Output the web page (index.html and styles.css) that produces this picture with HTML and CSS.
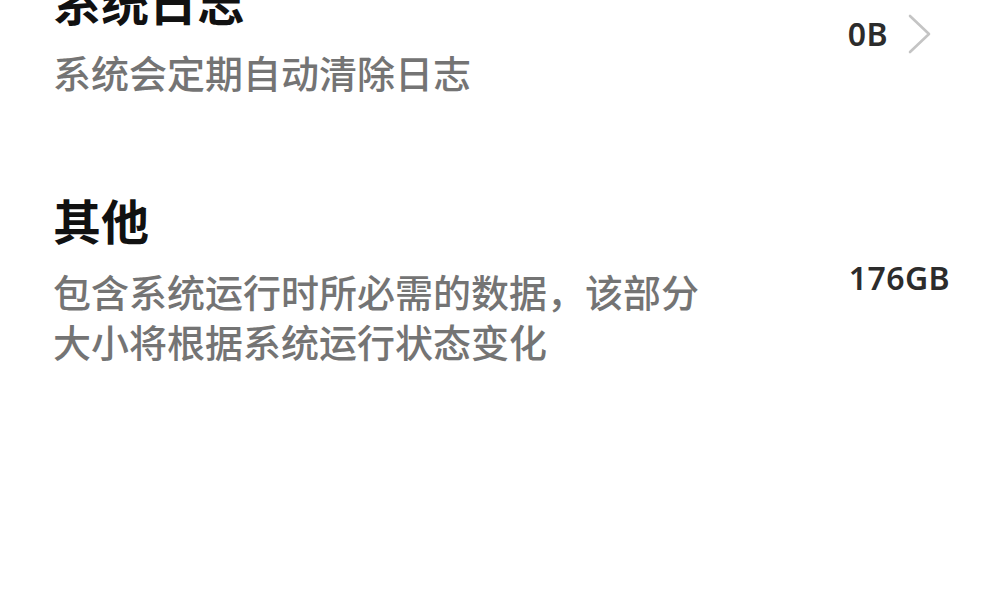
FILE: index.html
```html
<!DOCTYPE html>
<html lang="zh-CN">
<head>
<meta charset="utf-8">
<link rel="stylesheet" href="styles.css">
</head>
<body>
<div class="list">
  <div class="row">
    <div class="text">
      <div class="title">系统日志</div>
      <div class="desc">系统会定期自动清除日志</div>
    </div>
    <div class="value">0B</div>
    <svg class="chev" width="24" height="40" viewBox="0 0 24 40"><path d="M2 2 L21 20 L2 38" fill="none" stroke="#c4c4c4" stroke-width="2.6" stroke-linecap="round" stroke-linejoin="round"/></svg>
  </div>
  <div class="row">
    <div class="text">
      <div class="title">其他</div>
      <div class="desc">包含系统运行时所必需的数据，该部分大小将根据系统运行状态变化</div>
    </div>
    <div class="value">176GB</div>
  </div>
</div>
</body>
</html>
```
FILE: styles.css
```css
html, body {
  margin: 0;
  padding: 0;
  background: #ffffff;
  overflow: hidden;
}
body {
  width: 985px;
  height: 615px;
  font-family: "Noto Sans CJK SC", "Noto Sans", sans-serif;
}
.list {
  margin-top: -76px;
}
.row {
  display: flex;
  align-items: center;
  padding: 46px 35px 46px 53px;
}
.text {
  flex: 1;
  min-width: 0;
}
.title {
  font-size: 48px;
  line-height: 60px;
  font-weight: 700;
  color: #111111;
}
.desc {
  margin-top: 17px;
  font-size: 38px;
  line-height: 50px;
  font-weight: 500;
  color: #747474;
  max-width: 660px;
}
.value {
  font-family: "Noto Sans", "Open Sans", sans-serif;
  font-size: 32px;
  font-weight: 600;
  letter-spacing: 0.4px;
  color: #2c2c2c;
}
.chev {
  margin-left: 20px;
  margin-right: 18px;
  flex: none;
}
```
